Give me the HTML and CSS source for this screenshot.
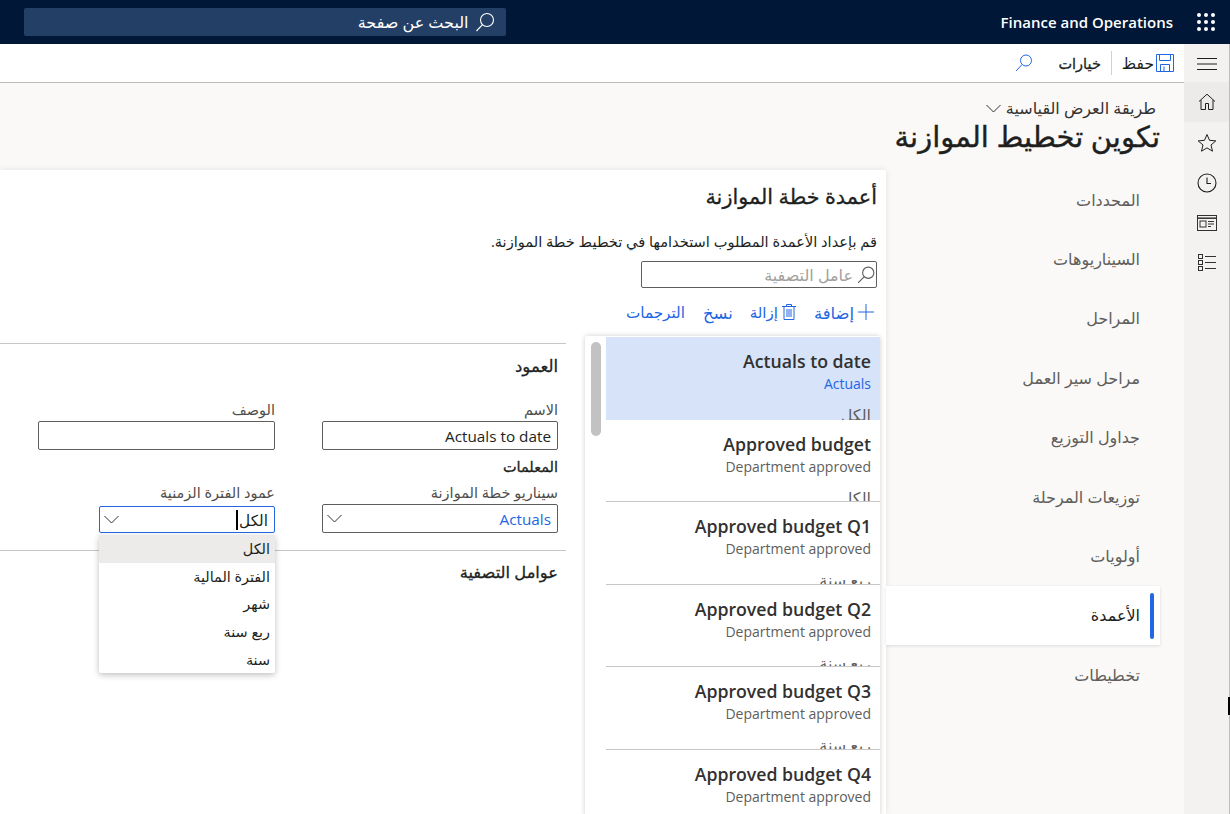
FILE: index.html
```html
<!DOCTYPE html>
<html lang="ar" dir="rtl">
    <head>
        <meta charset="UTF-8">
        <meta name="viewport" content="width=device-width, initial-scale=1.0">
        <title>تكوين تخطيط الموازنة</title>
        <link rel="stylesheet" href="styles.css">
    </head>
    <body>
        <div class="topbar">
            <svg class="waffle" width="20" height="20" viewBox="0 0 20 20" fill="#fff">
                <circle cx="3" cy="3" r="2"/><circle cx="10" cy="3" r="2"/><circle cx="17" cy="3" r="2"/>
                <circle cx="3" cy="10" r="2"/><circle cx="10" cy="10" r="2"/><circle cx="17" cy="10" r="2"/>
                <circle cx="3" cy="17" r="2"/><circle cx="10" cy="17" r="2"/><circle cx="17" cy="17" r="2"/>
            </svg>
            <span class="appName">Finance and Operations</span>
            <div class="pageSearch">
                <svg width="22" height="20" viewBox="0 0 22 20" fill="none" stroke="#fff" stroke-width="1.1">
                    <circle cx="14" cy="8" r="6.5"/><path d="M9.5 12.7 3.5 19"/>
                </svg>
                <span>البحث عن صفحة</span>
            </div>
        </div>

        <div class="shell">
            <div class="rail">
                <div class="railItem railMenu">
                    <svg width="20" height="14" viewBox="0 0 20 14" stroke="#201f1e" fill="none"><path d="M0 1.5h20M0 7h20M0 12.5h20"/></svg>
                </div>
                <div class="railItem railActive">
                    <svg width="18" height="18" viewBox="0 0 18 18" stroke="#201f1e" fill="none"><path d="M1 8.5 9 1.2l8 7.3M3 7v9.5h4.5v-6h3v6H15V7"/></svg>
                </div>
                <div class="railItem">
                    <svg width="20" height="20" viewBox="0 0 20 20" stroke="#201f1e" fill="none"><path d="m10 1.5 2.5 5.8 6.3.6-4.8 4.1 1.5 6.2-5.5-3.3-5.5 3.3 1.5-6.2-4.8-4.1 6.3-.6z"/></svg>
                </div>
                <div class="railItem">
                    <svg width="20" height="20" viewBox="0 0 20 20" stroke="#201f1e" fill="none" stroke-width="1.1"><circle cx="10" cy="10" r="9"/><path d="M10 4.5V10.5h4"/></svg>
                </div>
                <div class="railItem">
                    <svg width="20" height="16" viewBox="0 0 20 16" stroke="#323130" fill="none"><rect x=".5" y=".5" width="19" height="15"/><path d="M.5 3.2h19" stroke-width="1.5"/><rect x="3" y="6" width="6" height="6"/><path d="M11 6.5h6M11 9h6M11 11.5h3"/></svg>
                </div>
                <div class="railItem">
                    <svg width="18" height="18" viewBox="0 0 18 18" stroke="#323130" fill="none"><rect x=".5" y=".5" width="4" height="4"/><rect x=".5" y="6.5" width="4" height="4"/><rect x=".5" y="12.5" width="4" height="4"/><path d="M7 2.5h11M7 8.5h11M7 14.5h11"/></svg>
                </div>
            </div>

            <div class="main">
                <div class="actionBar">
                    <svg class="saveIcon" width="18" height="18" viewBox="0 0 18 18" stroke="#2266e3" fill="none"><path d="M.5.5h17v17H.5z"/><path d="M3.5.5v6h11v-6M4.5 17.5v-7h9v7M8 12.5v5"/></svg>
                    <span class="actionText">حفظ</span>
                    <span class="actionSep"></span>
                    <span class="actionText actionOptions">خيارات</span>
                    <svg class="actionSearch" width="18" height="18" viewBox="0 0 18 18" fill="none" stroke="#2266e3"><circle cx="11" cy="6.5" r="5.5"/><path d="M7 10.5 1 17"/></svg>
                </div>

                <div class="pageHead">
                    <div class="viewName">
                        <span>طريقة العرض القياسية</span>
                        <svg width="15" height="9" viewBox="0 0 15 9" fill="none" stroke="#323130"><path d="m.5 1 7 7 7-7"/></svg>
                    </div>
                    <h1 class="pageTitle">تكوين تخطيط الموازنة</h1>
                </div>

                <div class="pageBody">
                    <div class="tabs">
                        <div class="tab">المحددات</div>
                        <div class="tab">السيناريوهات</div>
                        <div class="tab">المراحل</div>
                        <div class="tab">مراحل سير العمل</div>
                        <div class="tab">جداول التوزيع</div>
                        <div class="tab">توزيعات المرحلة</div>
                        <div class="tab">أولويات</div>
                        <div class="tab tabActive">الأعمدة</div>
                        <div class="tab">تخطيطات</div>
                    </div>

                    <div class="panel">
                        <div class="panelHead">
                            <h2 class="panelTitle">أعمدة خطة الموازنة</h2>
                            <p class="panelDesc">قم بإعداد الأعمدة المطلوب استخدامها في تخطيط خطة الموازنة.</p>
                            <div class="filterBox">
                                <svg width="18" height="18" viewBox="0 0 16 16" fill="none" stroke="#605e5c"><circle cx="10" cy="6" r="5"/><path d="M6.3 9.7 1 15"/></svg>
                                <span>عامل التصفية</span>
                            </div>
                            <div class="toolbar">
                                <span class="tool">
                                    <svg width="16" height="16" viewBox="0 0 16 16" stroke="#2266e3"><path d="M8 0v16M0 8h16"/></svg>
                                    إضافة
                                </span>
                                <span class="tool toolRemove">
                                    <svg width="14" height="16" viewBox="0 0 14 16" stroke="#2266e3" fill="none"><path d="M0 2.5h14M4.5 2.5V.5h5v2M2 2.5v13h10v-13M5 5v8M7 5v8M9 5v8"/></svg>
                                    إزالة
                                </span>
                                <span class="tool">نسخ</span>
                                <span class="tool toolLast">الترجمات</span>
                            </div>
                        </div>

                        <div class="panelCols">
                            <div class="listCard">
                                <div class="listItems">
                                    <div class="listItem listSelected">
                                        <div class="itemName">Actuals to date</div>
                                        <div class="itemSub">Actuals</div>
                                        <div class="itemExtra">الكل</div>
                                    </div>
                                    <div class="listItem">
                                        <div class="itemName">Approved budget</div>
                                        <div class="itemSub">Department approved</div>
                                        <div class="itemExtra">الكل</div>
                                    </div>
                                    <div class="listItem">
                                        <div class="itemName">Approved budget Q1</div>
                                        <div class="itemSub">Department approved</div>
                                        <div class="itemExtra">ربع سنة</div>
                                    </div>
                                    <div class="listItem">
                                        <div class="itemName">Approved budget Q2</div>
                                        <div class="itemSub">Department approved</div>
                                        <div class="itemExtra">ربع سنة</div>
                                    </div>
                                    <div class="listItem">
                                        <div class="itemName">Approved budget Q3</div>
                                        <div class="itemSub">Department approved</div>
                                        <div class="itemExtra">ربع سنة</div>
                                    </div>
                                    <div class="listItem">
                                        <div class="itemName">Approved budget Q4</div>
                                        <div class="itemSub">Department approved</div>
                                        <div class="itemExtra">ربع سنة</div>
                                    </div>
                                </div>
                                <div class="scrollTrack"><div class="scrollThumb"></div></div>
                            </div>

                            <div class="detail">
                                <div class="section">
                                    <div class="sectionTitle">العمود</div>
                                    <div class="fieldRow fieldRowFirst">
                                        <div class="field">
                                            <label class="fieldLabel">الاسم</label>
                                            <div class="input">Actuals to date</div>
                                        </div>
                                        <div class="field fieldFar">
                                            <label class="fieldLabel">الوصف</label>
                                            <div class="input"></div>
                                        </div>
                                    </div>
                                    <div class="groupTitle">المعلمات</div>
                                    <div class="fieldRow">
                                        <div class="field">
                                            <label class="fieldLabel">سيناريو خطة الموازنة</label>
                                            <div class="input inputLink">
                                                <span>Actuals</span>
                                                <svg width="15" height="9" viewBox="0 0 15 9" fill="none" stroke="#323130"><path d="m.5 1 7 7 7-7"/></svg>
                                            </div>
                                        </div>
                                        <div class="field fieldNear">
                                            <label class="fieldLabel">عمود الفترة الزمنية</label>
                                            <div class="input inputFocus">
                                                <span class="caretText">الكل</span>
                                                <svg width="15" height="9" viewBox="0 0 15 9" fill="none" stroke="#323130"><path d="m.5 1 7 7 7-7"/></svg>
                                            </div>
                                            <div class="dropdown">
                                                <div class="option optionActive">الكل</div>
                                                <div class="option">الفترة المالية</div>
                                                <div class="option">شهر</div>
                                                <div class="option">ربع سنة</div>
                                                <div class="option">سنة</div>
                                            </div>
                                        </div>
                                    </div>
                                </div>
                                <div class="section">
                                    <div class="filterTitle">عوامل التصفية</div>
                                </div>
                            </div>
                        </div>
                    </div>
                </div>
            </div>
        </div>
        <div class="mouseCursor"></div>
    </body>
</html>
```
FILE: styles.css
```css
* {
    box-sizing: border-box;
}
html, body {
    height: 100%;
}
body {
    margin: 0;
    height: 814px;
    overflow: hidden;
    font-family: "Open Sans", "DejaVu Sans", sans-serif;
    font-size: 14px;
    color: #201f1e;
    background-color: #faf9f8;
}
.topbar {
    display: flex;
    align-items: center;
    height: 44px;
    background-color: #001737;
    color: #fff;
}
.waffle {
    margin-right: 14px;
}
.appName {
    margin-right: 23px;
    font-size: 15px;
    font-weight: 600;
    direction: ltr;
}
.pageSearch {
    display: flex;
    align-items: center;
    gap: 4px;
    width: 482px;
    height: 28px;
    margin-right: 495px;
    padding-right: 11px;
    background-color: #243f66;
    border-radius: 2px;
    font-size: 16px;
}
.shell {
    display: flex;
    height: 770px;
}
.rail {
    flex: none;
    width: 46px;
    padding-top: 1px;
    background-color: #f3f2f1;
    border-right: 1px solid #bebbb8;
}
.railItem {
    display: flex;
    align-items: center;
    justify-content: center;
    height: 40px;
}
.railMenu {
    height: 37px;
}
.railActive {
    background-color: #edebe9;
    margin-bottom: 1px;
}
.main {
    flex: 1;
    min-width: 0;
}
.actionBar {
    display: flex;
    align-items: center;
    height: 39px;
    padding-right: 10px;
    background-color: #fff;
    border-bottom: 1px solid #bebbb8;
}
.saveIcon {
    margin-left: 2px;
}
.actionText {
    font-size: 15.5px;
}
.actionOptions {
    font-size: 14.5px;
    -webkit-text-stroke: 0.3px #201f1e;
}
.actionSep {
    width: 1px;
    height: 24px;
    margin: 0 10px;
    background-color: #d2d0ce;
}
.actionSearch {
    margin-right: 25px;
}
.pageHead {
    height: 87px;
    padding: 15px 24px 0 0;
}
.viewName {
    display: flex;
    align-items: center;
    gap: 5px;
    padding-right: 4px;
    height: 20px;
    font-size: 16px;
    color: #323130;
}
.pageTitle {
    margin: 0;
    font-size: 29px;
    line-height: 36px;
    font-weight: 400;
    -webkit-text-stroke: 0.4px #201f1e;
}
.pageBody {
    display: flex;
    height: 644px;
}
.tabs {
    flex: none;
    width: 298px;
    padding-right: 24px;
}
.tab {
    display: flex;
    align-items: center;
    position: relative;
    height: 59.4px;
    padding-right: 20px;
    font-size: 16px;
    color: #605e5c;
}
.tabActive {
    background-color: #fff;
    color: #201f1e;
    box-shadow: 0 1px 3px rgba(0, 0, 0, 0.12);
}
.tabActive::before {
    content: "";
    position: absolute;
    right: 6px;
    top: 7px;
    bottom: 6px;
    width: 4px;
    border-radius: 2px;
    background-color: #2266e3;
}
.panel {
    flex: 1;
    min-width: 0;
    padding-right: 6px;
    background-color: #fff;
    box-shadow: 0 0 6px rgba(0, 0, 0, 0.1);
    overflow: hidden;
}
.panelHead {
    height: 166px;
    padding: 12px 3px 0 0;
}
.panelTitle {
    margin: 0;
    font-size: 20.8px;
    line-height: 28px;
    font-weight: 400;
    -webkit-text-stroke: 0.3px #201f1e;
}
.panelDesc {
    margin: 21px 0 0;
    font-size: 14.6px;
    line-height: 20px;
}
.filterBox {
    display: flex;
    align-items: center;
    gap: 4px;
    width: 236px;
    height: 27px;
    margin-top: 10px;
    padding-right: 1px;
    border: 1px solid #605e5c;
    border-radius: 2px;
    font-size: 16px;
    color: #a19f9d;
}
.toolbar {
    display: flex;
    gap: 18px;
    margin-top: 14px;
    padding-right: 3px;
    font-size: 16.4px;
    color: #2266e3;
}
.tool {
    display: flex;
    align-items: center;
    gap: 4px;
    height: 20px;
}
.toolRemove {
    font-size: 15px;
    margin-left: -1px;
}
.toolLast {
    font-size: 15.2px;
}
.panelCols {
    display: flex;
    height: 480px;
}
.listCard {
    display: flex;
    flex: none;
    width: 295px;
    height: 480px;
    padding-top: 1px;
    box-shadow: 0 0 5px rgba(0, 0, 0, 0.2);
    overflow: hidden;
    border-radius: 2px 2px 0 0;
}
.listItems {
    flex: 1;
    min-width: 0;
}
.listItem {
    height: 82.6px;
    padding: 13px 9px 0 0;
    border-bottom: 1px solid #c8c6c4;
    overflow: hidden;
}
.listSelected {
    background-color: #d6e3f9;
    border-bottom: none;
}
.itemName {
    font-size: 17.7px;
    line-height: 23px;
    font-weight: 600;
    color: #323130;
    direction: ltr;
    text-align: right;
}
.itemSub {
    font-size: 14px;
    line-height: 22px;
    color: #605e5c;
    direction: ltr;
    text-align: right;
}
.listSelected .itemSub {
    color: #2266e3;
}
.itemExtra {
    margin-top: 9px;
    font-size: 16px;
    line-height: 22px;
    color: #605e5c;
}
.scrollTrack {
    flex: none;
    width: 21px;
    padding: 5px 5px 0 6px;
}
.scrollThumb {
    width: 10px;
    height: 94px;
    border-radius: 5px;
    background-color: #c2c2c2;
}
.detail {
    flex: 1;
    margin-right: 19px;
    min-width: 0;
    margin-top: 7px;
}
.section {
    padding-right: 8px;
    border-top: 1px solid #c8c6c4;
}
.sectionTitle {
    margin-top: 12px;
    font-size: 16.5px;
    line-height: 20px;
    -webkit-text-stroke: 0.3px #201f1e;
}
.fieldRow {
    display: flex;
    gap: 47px;
}
.fieldRowFirst {
    margin-top: 24px;
}
.field {
    position: relative;
    width: 236px;
}
.fieldFar {
    width: 237px;
}
.fieldNear {
    width: 176px;
}
.fieldLabel {
    display: block;
    height: 21px;
    font-size: 14.5px;
    line-height: 20px;
    color: #4f4d4b;
}
.input {
    display: flex;
    align-items: center;
    justify-content: space-between;
    height: 29px;
    padding: 0 6px 0 4px;
    border: 1px solid #605e5c;
    border-radius: 2px;
    font-size: 15.3px;
    direction: rtl;
}
.inputLink {
    color: #2266e3;
}
.inputFocus {
    height: 27px;
    margin-top: 2px;
    border-color: #2266e3;
}
.caretText {
    padding-left: 1px;
    border-left: 2px solid #000;
    line-height: 20px;
}
.groupTitle {
    margin-top: 7px;
    height: 20px;
    font-size: 14.5px;
    line-height: 20px;
    -webkit-text-stroke: 0.3px #201f1e;
}
.fieldRow + .groupTitle + .fieldRow {
    margin-top: 6px;
}
.dropdown {
    position: absolute;
    top: 52px;
    right: 0;
    width: 176px;
    background-color: #fff;
    border-radius: 2px;
    box-shadow: 0 2px 6px rgba(0, 0, 0, 0.25);
    z-index: 10;
}
.option {
    display: flex;
    align-items: center;
    height: 27.6px;
    padding-right: 5px;
    font-size: 14.4px;
}
.optionActive {
    background-color: #edebe9;
}
.section + .section {
    margin-top: 17px;
}
.filterTitle {
    margin-top: 11px;
    font-size: 16.3px;
    line-height: 20px;
    -webkit-text-stroke: 0.3px #201f1e;
}
.mouseCursor {
    position: absolute;
    left: 1228px;
    top: 697px;
    width: 2px;
    height: 18px;
    background-color: #000;
}
```
